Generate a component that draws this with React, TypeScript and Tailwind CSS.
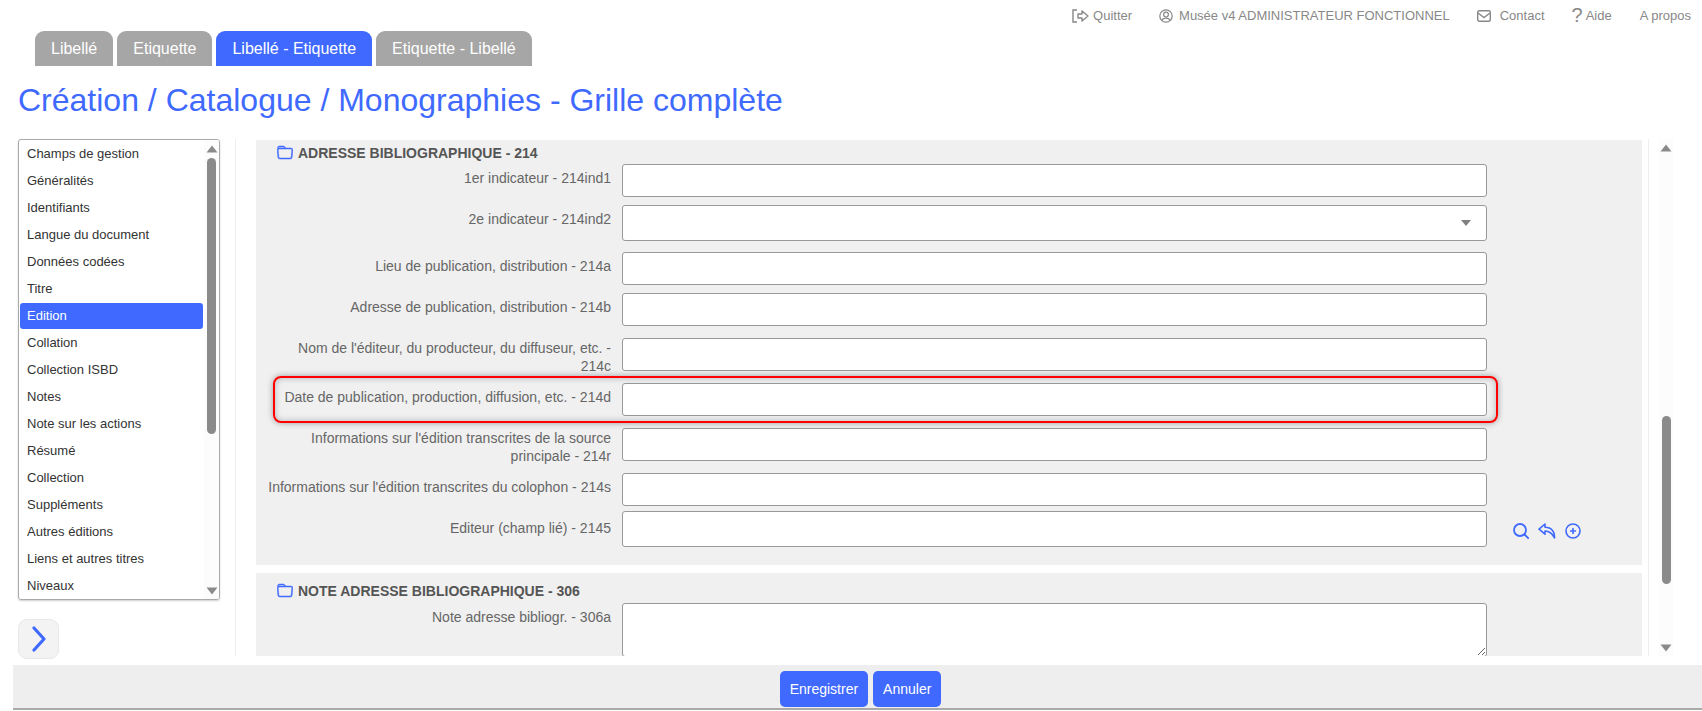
import React from "react";
import { BsFolder } from "react-icons/bs";

const Up = () => (
  <svg width="12" height="8" viewBox="0 0 12 8"><path d="M6 0.5 L11.5 7.5 H0.5 Z" fill="#8a8a8a" /></svg>
);
const Down = () => (
  <svg width="12" height="8" viewBox="0 0 12 8"><path d="M0.5 0.5 H11.5 L6 7.5 Z" fill="#8a8a8a" /></svg>
);

const sideItems = [
  "Champs de gestion", "Généralités", "Identifiants", "Langue du document", "Données codées", "Titre", "Edition",
  "Collation", "Collection ISBD", "Notes", "Note sur les actions", "Résumé", "Collection", "Suppléments",
  "Autres éditions", "Liens et autres titres", "Niveaux",
];

function Row({ label, mt, pt = "pt-[5px]", h, select, area, children }: { label: string; mt: string; pt?: string; h?: string; select?: boolean; area?: boolean; children?: React.ReactNode }) {
  return (
    <div className={`flex ${mt}`}>
      <div className={`w-[344px] ml-[11px] mr-[11px] shrink-0 text-right text-[14px] leading-[18px] text-[#666] ${pt}`}>{label}</div>
      {area ? (
        <textarea className={`${h} w-[865px] shrink-0 bg-white border border-[#999] rounded-[3px] block`} />
      ) : (
        <div className={`${h ?? "h-[33px]"} w-[865px] shrink-0 bg-white border border-[#999] rounded-[3px] flex items-center justify-end pr-[15px]`}>
          {select && <svg width="10" height="6" viewBox="0 0 10 6"><path d="M0 0 H10 L5 6 Z" fill="#808080" /></svg>}
        </div>
      )}
      {children}
    </div>
  );
}

function Heading({ text }: { text: string }) {
  return (
    <div className="flex items-center h-[14px] pl-[21px]">
      <BsFolder className="text-[#406aff] w-[16px] h-[16px] mr-[5px] stroke-[0.5px]" />
      <span className="text-[14px] font-bold text-[#555]">{text}</span>
    </div>
  );
}

export default function App() {
  return (
    <div className="relative h-[711px] w-[1702px] overflow-hidden bg-white font-['Liberation_Sans',Arial,sans-serif]">
      <div className="flex items-center justify-end h-[31px] text-[13px] text-[#888] pr-[11px]">
        <span className="flex items-center mr-[27px]">
          <svg width="17" height="14" viewBox="0 0 17 14" fill="none" stroke="#888" strokeWidth="1.4" className="mr-[4px]">
            <path d="M5 1 H1 V13 H5" />
            <path d="M6 5 H10 V2 L16 7 L10 12 V9 H6 Z" strokeLinejoin="round" />
          </svg>
          Quitter
        </span>
        <span className="flex items-center mr-[27px]">
          <svg width="14" height="14" viewBox="0 0 14 14" fill="none" stroke="#888" strokeWidth="1.2" className="mr-[6px]">
            <circle cx="7" cy="7" r="6.2" />
            <circle cx="7" cy="5.6" r="2.4" />
            <path d="M3 11.5 C3.6 9.6 5 9.2 7 9.2 C9 9.2 10.4 9.6 11 11.5" />
          </svg>
          Musée v4 ADMINISTRATEUR FONCTIONNEL
        </span>
        <span className="flex items-center mr-[27px]">
          <svg width="14" height="12" viewBox="0 0 14 12" fill="none" stroke="#888" strokeWidth="1.4" className="mr-[9px]">
            <rect x="0.7" y="0.7" width="12.6" height="10.6" rx="1.5" />
            <path d="M1 3 L7 7.5 L13 3" />
          </svg>
          Contact
        </span>
        <span className="flex items-center mr-[28px]">
          <span className="text-[20px] leading-none mr-[3px] pb-[2px]">?</span>
          Aide
        </span>
        <span>A propos</span>
      </div>

      <div className="flex gap-[4px] pl-[35px] h-[35px]">
        {["Libellé", "Etiquette", "Libellé - Etiquette", "Etiquette - Libellé"].map((t, i) => (
          <div key={t} className={`px-[16px] flex items-center rounded-t-[9px] text-[16px] text-white ${i === 2 ? "bg-[#406aff]" : "bg-[#a6a6a6]"}`}>{t}</div>
        ))}
      </div>

      <h1 className="pl-[18px] mt-[13px] h-[42px] text-[32px] leading-[42px] text-[#406aff]">Création / Catalogue / Monographies - Grille complète</h1>

      <div className="flex mt-[18px] h-[517px] items-start">
        <div className="ml-[18px] w-[202px] shrink-0">
          <div className="relative h-[461px] border border-[#aaa] rounded-[3px] shadow-[0_1px_2px_rgba(0,0,0,0.2)] px-[1px] overflow-hidden">
            <div className="w-[183px]">
              {sideItems.map((s) => (
                <div key={s} className={`flex items-center pl-[7px] text-[13px] rounded-[3px] ${s === "Edition" ? "bg-[#406aff] text-white h-[26px] mt-[1px]" : "h-[27px] text-[#333]"}`}>{s}</div>
              ))}
            </div>
            <div className="absolute right-0 top-0 bottom-0 w-[15px] flex flex-col items-center pt-[5px] pb-[4px] bg-[#fcfcfc]">
              <Up />
              <div className="w-[9px] h-[276px] mt-[5px] bg-[#8a8a8a] rounded-full" />
              <div className="mt-auto"><Down /></div>
            </div>
          </div>
          <div className="mt-[19px] w-[41px] h-[40px] bg-[#f3f3f3] border border-[#e8e8e8] rounded-[9px] flex items-center justify-center">
            <svg width="14" height="26" viewBox="0 0 14 26" fill="none" stroke="#406aff" strokeWidth="3.2" strokeLinecap="round" strokeLinejoin="round">
              <path d="M2 2 L12 13 L2 24" />
            </svg>
          </div>
        </div>

        <div className="ml-[15px] h-full border-l border-[#eee] w-[1px]" />

        <div className="ml-[20px] w-[1386px] h-full shrink-0 overflow-hidden">
          <div className="bg-[#f0f0f0] h-[425px] pt-[6px] mt-[1px]">
            <Heading text="ADRESSE BIBLIOGRAPHIQUE - 214" />
            <Row label="1er indicateur - 214ind1" mt="mt-[4px]" />
            <Row label="2e indicateur - 214ind2" mt="mt-[8px]" h="h-[36px]" select />
            <Row label="Lieu de publication, distribution - 214a" mt="mt-[11px]" />
            <Row label="Adresse de publication, distribution - 214b" mt="mt-[8px]" />
            <Row label="Nom de l'éditeur, du producteur, du diffuseur, etc. - 214c" mt="mt-[12px]" pt="pt-[1px]" />
            <Row label="Date de publication, production, diffusion, etc. - 214d" mt="mt-[8px]" />
            <Row label="Informations sur l'édition transcrites de la source principale - 214r" mt="mt-[12px]" pt="pt-[1px]" />
            <Row label="Informations sur l'édition transcrites du colophon - 214s" mt="mt-[8px]" />
            <Row label="Editeur (champ lié) - 2145" mt="mt-[5px]" h="h-[36px]" pt="pt-[8px]">
              <div className="flex items-start ml-[26px] gap-[9px] pt-[12px]">
                <svg width="16" height="16" viewBox="0 0 16 16" fill="none" stroke="#406aff" strokeWidth="1.8" strokeLinecap="round">
                  <circle cx="7" cy="7" r="6" />
                  <path d="M11.5 11.5 L15.2 15.2" />
                </svg>
                <svg width="18" height="16" viewBox="0 0 18 16" fill="none" stroke="#406aff" strokeWidth="1.6" strokeLinejoin="round">
                  <path d="M7 1 L1 6.2 L7 11.2 V8 C11 8 14 9.8 16.5 15 C17 8.5 13.5 4.2 7 4.2 Z" />
                </svg>
                <svg width="16" height="16" viewBox="0 0 16 16" fill="none" stroke="#406aff" strokeWidth="1.6">
                  <circle cx="8" cy="8" r="7" />
                  <path d="M8 5 V11 M5 8 H11" />
                </svg>
              </div>
            </Row>
          </div>
          <div className="bg-[#f0f0f0] h-[120px] mt-[8px] pt-[11px]">
            <Heading text="NOTE ADRESSE BIBLIOGRAPHIQUE - 306" />
            <Row label="Note adresse bibliogr. - 306a" mt="mt-[5px]" h="h-[54px]" area />
          </div>
        </div>

        <div className="ml-[6px] h-full border-l border-[#eee] w-[1px]" />

        <div className="ml-[10px] w-[14px] h-full bg-[#fcfcfc] flex flex-col items-center pt-[5px] pb-[4px]">
          <Up />
          <div className="w-[9px] h-[168px] mt-[264px] bg-[#8a8a8a] rounded-full" />
          <div className="mt-auto"><Down /></div>
        </div>
      </div>

      <div className="absolute left-[13px] right-0 bottom-[1px] h-[45px] bg-[#eee] border-b-2 border-[#aaa] flex justify-center gap-[5px] pt-[6px] pl-[6px]">
        <div className="h-[36px] px-[10px] bg-[#406aff] text-white text-[14px] rounded-[5px] flex items-center">Enregistrer</div>
        <div className="h-[36px] px-[10px] bg-[#406aff] text-white text-[14px] rounded-[5px] flex items-center">Annuler</div>
      </div>

      <div className="absolute left-[273px] top-[376px] w-[1225px] h-[47px] border-2 border-[#f00] rounded-[8px] shadow-[0_0_6px_rgba(0,0,0,0.35),inset_0_0_6px_rgba(0,0,0,0.25)]" />
    </div>
  );
}
